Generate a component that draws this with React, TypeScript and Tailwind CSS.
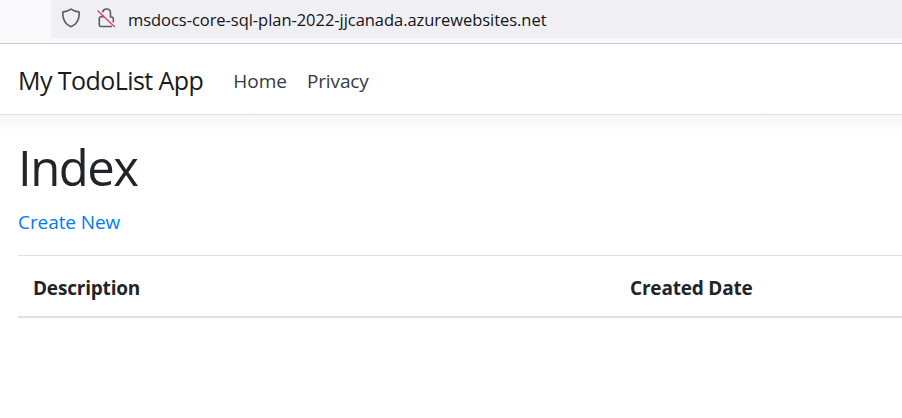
export default function App() {
  return (
    <div className="flex h-[418px] w-[902px] flex-col overflow-hidden bg-white font-['Open_Sans',sans-serif] text-[#212529]">
      <div className="flex h-[44px] shrink-0 items-start border-b border-[#cccccf] bg-[#f9f9fb] pl-[51px]">
        <div className="flex h-[38px] w-full items-center rounded-bl-[4px] bg-[#f0f0f4] pl-[10px]">
          <svg className="mt-[-2px] h-5 w-5 shrink-0" viewBox="0 0 20 20" fill="none" stroke="#5b5b66" strokeWidth="1.6" strokeLinejoin="round">
            <path d="M10 1.1C7.8 2.6 5 3.7 2.3 3.9Q1.7 4 1.7 4.7C1.7 11.500 4 16.500 10 18.700C16 16.500 18.300 11.500 18.300 4.700Q18.300 4 17.700 3.900C15 3.700 12.200 2.600 10 1.100Z" />
          </svg>
          <svg className="ml-[15px] mt-[-2px] h-5 w-5 shrink-0" viewBox="0 0 20 20" fill="none" stroke="#5b5b66" strokeWidth="1.6">
            <path d="M6.500 4.300C7 2.200 8.500 1 10.500 1C13 1 14.500 2.700 14.500 5V9H15.500Q17.300 9 17.300 10.800V14.500M6.500 6.800V8.800H5Q3.300 8.800 3.300 10.500V16.500Q3.300 18.500 5 18.500H16M6.500 8.800H8" />
            <path d="M1.500 2.500 18.800 19" stroke="#f0406a" strokeWidth="1.5" />
          </svg>
          <span className="ml-[12px] mt-[3px] whitespace-nowrap text-[16.5px] tracking-[-0.045px] text-[#15141a]">msdocs-core-sql-plan-2022-jjcanada.azurewebsites.net</span>
        </div>
      </div>
      <header className="flex h-[71px] shrink-0 items-center border-b border-[#dfe0e8] pl-[18px] text-[19px]">
        <span className="mt-[4px] text-[25px] tracking-[-0.57px] text-[#1a1a1a]">My TodoList App</span>
        <span className="ml-[30px] mt-[4px] text-[#343a40]">Home</span>
        <span className="ml-[20px] mt-[4px] tracking-[-0.12px] text-[#343a40]">Privacy</span>
      </header>
      <main className="flex-1 bg-[linear-gradient(to_bottom,#f7f7f7,#fcfcfc_14px,#ffffff_24px)] pl-[18px]">
        <h1 className="pt-[22px] text-[49px] leading-[60px] tracking-[-1.5px]">Index</h1>
        <a className="mt-[11px] block text-[19px] leading-[28px] tracking-[-0.08px] text-[#007bff]">Create New</a>
        <div className="mt-[19px] flex h-[63px] items-center border-t border-b-2 border-[#dee2e6] pl-[15px] pt-[5px] text-[19px] font-bold tracking-[-0.19px]">
          <span className="w-[597px]">Description</span>
          <span>Created Date</span>
        </div>
      </main>
    </div>
  );
}
